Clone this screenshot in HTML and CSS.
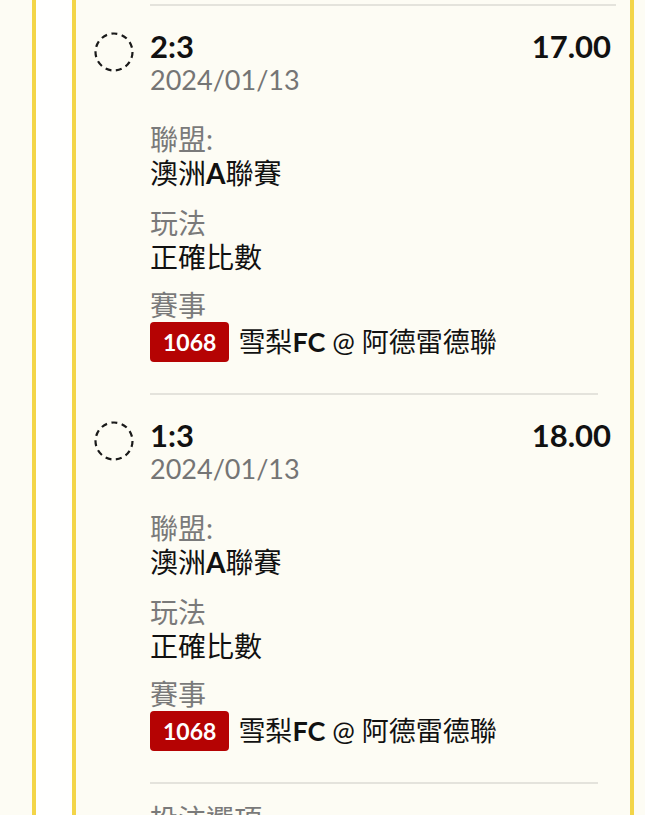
FILE: index.html
```html
<!DOCTYPE html>
<html lang="zh-Hant">
<head>
    <meta charset="UTF-8">
    <meta name="viewport" content="width=device-width, initial-scale=1.0">
    <title>投注紀錄</title>
    <link rel="stylesheet" href="styles.css">
</head>
<body>
    <div class="rail">
        <div class="panel">
            <div class="sep sep-top"></div>

            <div class="bet">
                <div class="pick">
                    <svg width="40" height="40" viewBox="0 0 40 40"><circle cx="20" cy="20" r="18.5" fill="none" stroke="#1a1a1a" stroke-width="2.2" stroke-dasharray="6 4.5"/></svg>
                </div>
                <div class="bet-body">
                    <div class="bet-head">
                        <span class="score">2:3</span>
                        <span class="odds">17.00</span>
                    </div>
                    <div class="date">2024/01/13</div>
                    <div class="field">
                        <div class="label">聯盟:</div>
                        <div class="value">澳洲<span class="latin">A</span>聯賽</div>
                    </div>
                    <div class="field">
                        <div class="label">玩法</div>
                        <div class="value">正確比數</div>
                    </div>
                    <div class="field field-match">
                        <div class="label">賽事</div>
                        <div class="match">
                            <span class="badge">1068</span>
                            <span class="value">雪梨<span class="latin">FC</span> @ 阿德雷德聯</span>
                        </div>
                    </div>
                    <div class="sep"></div>
                </div>
            </div>

            <div class="bet">
                <div class="pick">
                    <svg width="40" height="40" viewBox="0 0 40 40"><circle cx="20" cy="20" r="18.5" fill="none" stroke="#1a1a1a" stroke-width="2.2" stroke-dasharray="6 4.5"/></svg>
                </div>
                <div class="bet-body">
                    <div class="bet-head">
                        <span class="score">1:3</span>
                        <span class="odds">18.00</span>
                    </div>
                    <div class="date">2024/01/13</div>
                    <div class="field">
                        <div class="label">聯盟:</div>
                        <div class="value">澳洲<span class="latin">A</span>聯賽</div>
                    </div>
                    <div class="field">
                        <div class="label">玩法</div>
                        <div class="value">正確比數</div>
                    </div>
                    <div class="field field-match">
                        <div class="label">賽事</div>
                        <div class="match">
                            <span class="badge">1068</span>
                            <span class="value">雪梨<span class="latin">FC</span> @ 阿德雷德聯</span>
                        </div>
                    </div>
                    <div class="sep"></div>
                </div>
            </div>

            <div class="footer-row">
                <div class="label">投注選項</div>
            </div>
        </div>
    </div>
</body>
</html>
```

FILE: styles.css
```css
/* bet slip list */
body {
    margin: 0;
    padding: 0;
    background-color: #fdfcf4;
    font-family: "Lato", "Noto Sans CJK TC", sans-serif;
    color: #111;
    overflow: hidden;
}
.rail {
    margin-left: 32px;
    width: 602px;
    border-left: 4px solid #f3d548;
    background-color: #fffffe;
    padding-left: 36px;
    box-sizing: border-box;
    min-height: 815px;
}
.panel {
    border-left: 4px solid #f3d548;
    border-right: 4px solid #f3d548;
    background-color: #fdfcf4;
    min-height: 815px;
    padding-top: 4px;
    box-sizing: border-box;
}
.sep {
    height: 2px;
    background-color: #e4e3dc;
}
.sep-top {
    margin-left: 74px;
    margin-right: 14px;
}
.bet {
    display: grid;
    grid-template-columns: 74px 1fr;
    padding-top: 23px;
}
.pick {
    padding-left: 18px;
    padding-top: 3px;
}
.pick svg {
    display: block;
}
.bet-body {
    padding-right: 19px;
}
.bet-head {
    display: flex;
    justify-content: space-between;
    font-size: 31px;
    line-height: 34px;
    font-weight: 700;
}
.date {
    font-size: 27px;
    line-height: 34px;
    color: #757575;
}
.field {
    margin-top: 16px;
    font-size: 28px;
    line-height: 34px;
}
.date + .field {
    margin-top: 25px;
}
.field-match {
    margin-top: 14px;
}
.label {
    color: #7a7a7a;
}
.value {
    color: #111;
}
.latin {
    font-weight: 700;
}
.match {
    display: flex;
    align-items: center;
    gap: 9px;
    height: 40px;
}
.match .value {
    font-size: 27px;
}
.badge {
    display: inline-block;
    background-color: #b50303;
    color: #fff;
    font-size: 23px;
    font-weight: 700;
    line-height: 40px;
    height: 40px;
    padding: 0 13px;
    border-radius: 4px;
}
.bet-body > .sep {
    margin-top: 31px;
    margin-right: 13px;
}
.footer-row {
    padding: 18px 0 0 74px;
    font-size: 28px;
    line-height: 34px;
}
```
